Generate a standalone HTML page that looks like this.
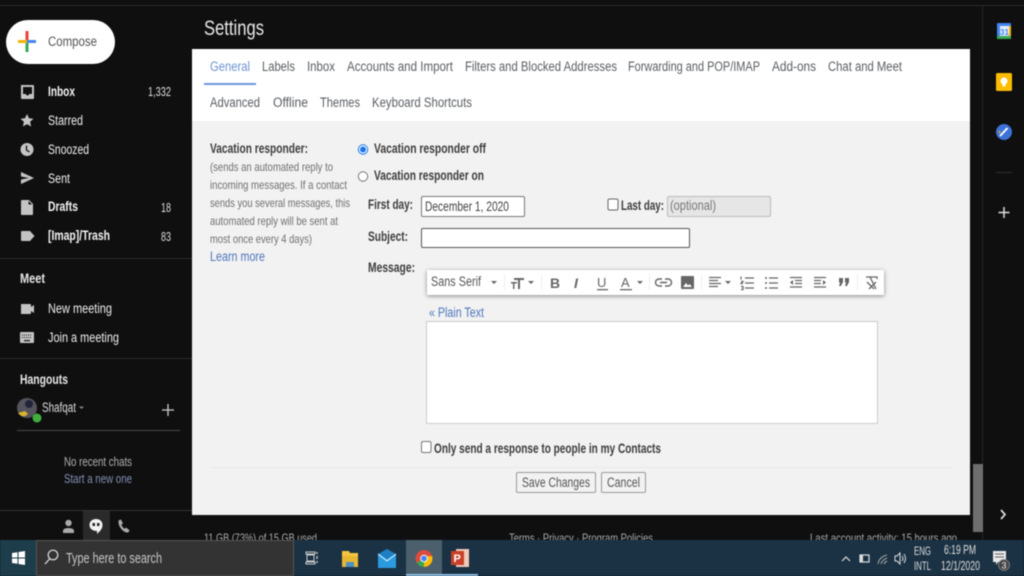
<!DOCTYPE html>
<html><head><meta charset="utf-8"><style>
html,body{margin:0;padding:0;background:#0f0f0f;width:1024px;height:576px;overflow:hidden}
svg{display:block;filter:blur(.5px)}
text{font-family:"Liberation Sans",sans-serif;font-size:13.5px}
.b{font-weight:700}
.w{fill:#eee}.g{fill:#5a5e63}.d{fill:#3c3c3c}.m{fill:#666}.l{fill:#4f76bb}
</style></head><body>
<svg width="1024" height="576" viewBox="0 0 1024 576" xmlns="http://www.w3.org/2000/svg">
<defs><filter id="sh" x="-5%" y="-30%" width="110%" height="170%"><feDropShadow dx="0" dy="1" stdDeviation="2" flood-color="#000" flood-opacity=".45"/></filter></defs>
<rect width="1024" height="576" fill="#0f0f0f"/>
<rect x="0" y="5" width="1024" height="1" fill="#2a2a2a"/>
<rect x="982" y="6" width="1" height="534" fill="#262626"/>

<!-- Compose -->
<rect x="6" y="20" width="109" height="44" rx="22" fill="#fff"/>
<rect x="18" y="40" width="9" height="3" fill="#f4b400"/><rect x="27" y="40" width="9" height="3" fill="#4285f4"/>
<rect x="25.500" y="31" width="3" height="9" fill="#ea4335"/><rect x="25.500" y="43" width="3" height="9" fill="#34a853"/>
<text x="48" y="46" textLength="49" lengthAdjust="spacingAndGlyphs" fill="#555">Compose</text>

<!-- Nav icons -->
<path d="M21 85h12a1 1 0 0 1 1 1v12a1 1 0 0 1-1 1H22a1 1 0 0 1-1-1zM23 87v7h3a1.500 1.500 0 0 0 3 0h3v-7z" fill="#c4c4c4" fill-rule="evenodd"/>
<path d="M27 114l2 4.300 4.500.5-3.400 3 1 4.700-4.100-2.400-4.100 2.400 1-4.700-3.400-3 4.500-.5z" fill="#c4c4c4"/>
<circle cx="27" cy="149.500" r="6.500" fill="#c4c4c4"/><path d="M26.500 145.500v4.500l3 2" fill="none" stroke="#111" stroke-width="1.300"/>
<path d="M21 172l13 6-13 6 0-4.500 8-1.500-8-1.500z" fill="#c4c4c4"/>
<path d="M22 200h7l4 4v10a1 1 0 0 1-1 1H22a1 1 0 0 1-1-1v-13a1 1 0 0 1 1-1z" fill="#c4c4c4"/><path d="M28.500 201v3.500H32" fill="#111"/>
<path d="M22 231h8l4.500 5-4.500 5h-8a1 1 0 0 1-1-1v-8a1 1 0 0 1 1-1z" fill="#c4c4c4"/>

<!-- Nav text -->
<text x="48" y="96" class="b" textLength="27" lengthAdjust="spacingAndGlyphs" fill="#f4f4f4">Inbox</text>
<text x="148" y="96" textLength="23" lengthAdjust="spacingAndGlyphs" fill="#ddd" style="font-size:12.5px">1,332</text>
<text x="48" y="125" textLength="35" lengthAdjust="spacingAndGlyphs" class="w">Starred</text>
<text x="48" y="154" textLength="41" lengthAdjust="spacingAndGlyphs" class="w">Snoozed</text>
<text x="48" y="183" textLength="22" lengthAdjust="spacingAndGlyphs" class="w">Sent</text>
<text x="48" y="211" class="b" textLength="30" lengthAdjust="spacingAndGlyphs" fill="#f4f4f4">Drafts</text>
<text x="161" y="212" textLength="10" lengthAdjust="spacingAndGlyphs" fill="#ddd" style="font-size:12.5px">18</text>
<text x="48" y="240" class="b" textLength="62" lengthAdjust="spacingAndGlyphs" fill="#f4f4f4">[Imap]/Trash</text>
<text x="161" y="241" textLength="10" lengthAdjust="spacingAndGlyphs" fill="#ddd" style="font-size:12.5px">83</text>
<rect x="0" y="258" width="192" height="1" fill="#2b2b2b"/>

<!-- Meet -->
<text x="20" y="283" class="b" textLength="25" lengthAdjust="spacingAndGlyphs" fill="#e8e8e8">Meet</text>
<path d="M21 304h9a1 1 0 0 1 1 1v2l3-2v8l-3-2v2a1 1 0 0 1-1 1h-9z" fill="#c4c4c4"/>
<rect x="20" y="332" width="14" height="11" rx="1" fill="#c4c4c4"/><path d="M22 335h10M22 337.500h10" stroke="#111" stroke-width="1" stroke-dasharray="1 1"/><rect x="24" y="340" width="6" height="1.200" fill="#111"/>
<text x="48" y="313" textLength="64" lengthAdjust="spacingAndGlyphs" class="w">New meeting</text>
<text x="48" y="342" textLength="71" lengthAdjust="spacingAndGlyphs" class="w">Join a meeting</text>
<rect x="0" y="358" width="192" height="1" fill="#2b2b2b"/>

<!-- Hangouts -->
<text x="20" y="384" class="b" textLength="48" lengthAdjust="spacingAndGlyphs" fill="#e8e8e8">Hangouts</text>
<circle cx="27" cy="408" r="10" fill="#55545c"/><circle cx="29" cy="404" r="4" fill="#20253c"/><path d="M18 413q5 6 10 1l-3-3z" fill="#d8b52b"/>
<circle cx="37" cy="418" r="4.500" fill="#3fae3f"/>
<text x="42" y="412" textLength="34" lengthAdjust="spacingAndGlyphs" fill="#ddd">Shafqat</text>
<path d="M79 406.500h5l-2.500 2.500z" fill="#888"/>
<path d="M168 404v12M162 410h12" stroke="#ccc" stroke-width="1.300"/>
<rect x="17" y="430" width="163" height="1" fill="#4a4a4a"/>
<text x="64" y="466" textLength="68" lengthAdjust="spacingAndGlyphs" fill="#b0b0b0" style="font-size:12.5px">No recent chats</text>
<text x="64" y="483" textLength="68" lengthAdjust="spacingAndGlyphs" fill="#8090b4" style="font-size:12.5px">Start a new one</text>
<rect x="0" y="510" width="192" height="1" fill="#333"/>
<rect x="83" y="511" width="27" height="29" fill="#2a2a2a"/>
<circle cx="68.500" cy="523" r="3.200" fill="#aaa"/><path d="M63 533v-2q0-3 5.500-3t5.500 3v2z" fill="#aaa"/>
<path d="M96 519c4.500 0 6.500 3 6.500 6 0 4-3 6.500-5.500 9v-3c-4 0-7.500-2-7.500-6 0-3.500 2.500-6 6.500-6z" fill="#f2f2f2"/><rect x="92.500" y="523" width="2.500" height="3" fill="#222"/><rect x="97" y="523" width="2.500" height="3" fill="#222"/>
<path d="M118.500 520.500l2.500-1 2 4-1.700 1.300q1 2.500 3.200 4l1.700-1.200 3.300 2.700-1 2q-3.500 1-7-3t-3-8.800z" fill="#aaa"/>

<!-- Header -->
<text x="204" y="35" textLength="60" lengthAdjust="spacingAndGlyphs" fill="#e8e8e8" style="font-size:21px">Settings</text>

<!-- Panel -->
<rect x="192" y="49" width="778" height="466" fill="#f2f2f2"/>
<rect x="192" y="49" width="778" height="72" fill="#fff"/>
<rect x="204" y="83" width="52" height="2" fill="#6d96da"/>
<g>
<text x="210" y="71" textLength="40" lengthAdjust="spacingAndGlyphs" fill="#6f93d2">General</text>
<text x="262" y="71" textLength="33" lengthAdjust="spacingAndGlyphs" class="g">Labels</text>
<text x="307" y="71" textLength="28" lengthAdjust="spacingAndGlyphs" class="g">Inbox</text>
<text x="347" y="71" textLength="106" lengthAdjust="spacingAndGlyphs" class="g">Accounts and Import</text>
<text x="465" y="71" textLength="152" lengthAdjust="spacingAndGlyphs" class="g">Filters and Blocked Addresses</text>
<text x="628" y="71" textLength="132" lengthAdjust="spacingAndGlyphs" class="g">Forwarding and POP/IMAP</text>
<text x="772" y="71" textLength="44" lengthAdjust="spacingAndGlyphs" class="g">Add-ons</text>
<text x="828" y="71" textLength="74" lengthAdjust="spacingAndGlyphs" class="g">Chat and Meet</text>
<text x="210" y="107" textLength="50" lengthAdjust="spacingAndGlyphs" class="g">Advanced</text>
<text x="273" y="107" textLength="35" lengthAdjust="spacingAndGlyphs" class="g">Offline</text>
<text x="320" y="107" textLength="40" lengthAdjust="spacingAndGlyphs" class="g">Themes</text>
<text x="372" y="107" textLength="100" lengthAdjust="spacingAndGlyphs" class="g">Keyboard Shortcuts</text>
</g>

<!-- Left description -->
<text x="210" y="153" class="b d" textLength="98" lengthAdjust="spacingAndGlyphs">Vacation responder:</text>
<g fill="#6f6f6f">
<text x="210" y="171" textLength="123" lengthAdjust="spacingAndGlyphs" style="font-size:12px">(sends an automated reply to</text>
<text x="210" y="189" textLength="137" lengthAdjust="spacingAndGlyphs" style="font-size:12px">incoming messages. If a contact</text>
<text x="210" y="207" textLength="140" lengthAdjust="spacingAndGlyphs" style="font-size:12px">sends you several messages, this</text>
<text x="210" y="225" textLength="128" lengthAdjust="spacingAndGlyphs" style="font-size:12px">automated reply will be sent at</text>
<text x="210" y="243" textLength="102" lengthAdjust="spacingAndGlyphs" style="font-size:12px">most once every 4 days)</text>
</g>
<text x="210" y="261" textLength="55" lengthAdjust="spacingAndGlyphs" class="l">Learn more</text>

<!-- Radios -->
<circle cx="363" cy="149.500" r="4.700" fill="#fff" stroke="#1a73e8" stroke-width="1"/><circle cx="363" cy="149.500" r="3" fill="#1a73e8"/>
<circle cx="363" cy="176.500" r="4.700" fill="#fff" stroke="#777" stroke-width="1"/>
<text x="374" y="153" class="b d" textLength="112" lengthAdjust="spacingAndGlyphs">Vacation responder off</text>
<text x="374" y="180" class="b d" textLength="110" lengthAdjust="spacingAndGlyphs">Vacation responder on</text>

<!-- First day -->
<text x="368" y="209" class="b d" textLength="45" lengthAdjust="spacingAndGlyphs">First day:</text>
<rect x="421.500" y="196.500" width="103" height="20" rx="1.500" fill="#fff" stroke="#777"/>
<text x="425" y="211" textLength="84" lengthAdjust="spacingAndGlyphs" fill="#444">December 1, 2020</text>
<rect x="608" y="199" width="10" height="11" rx="1.500" fill="#fff" stroke="#666"/>
<text x="621" y="210" class="b d" textLength="43" lengthAdjust="spacingAndGlyphs">Last day:</text>
<rect x="667.500" y="196.500" width="103" height="20" rx="1.500" fill="#e6e6e6" stroke="#bbb"/>
<text x="670" y="210" textLength="46" lengthAdjust="spacingAndGlyphs" fill="#777">(optional)</text>

<!-- Subject -->
<text x="368" y="241" class="b d" textLength="40" lengthAdjust="spacingAndGlyphs">Subject:</text>
<rect x="421.500" y="228.500" width="268" height="19" rx="1.500" fill="#fff" stroke="#555"/>

<!-- Message -->
<text x="368" y="272" class="b d" textLength="47" lengthAdjust="spacingAndGlyphs">Message:</text>
<rect x="427" y="270" width="457" height="25" rx="1" fill="#fff" filter="url(#sh)"/>
<text x="431" y="286" textLength="50" lengthAdjust="spacingAndGlyphs" fill="#555">Sans Serif</text>
<g fill="#666">
<path d="M491 281h6l-3 3zM528 281h6l-3 3zM637 281h6l-3 3zM725 281h6l-3 3z"/>
<rect x="514" y="278" width="10" height="2"/><rect x="518" y="278" width="2" height="11"/>
<rect x="511" y="282" width="6" height="1.500"/><rect x="513" y="282" width="1.500" height="7"/>
</g>
<text x="550" y="288" class="b" fill="#666" style="font-size:14px">B</text>
<text x="574" y="288" font-style="italic" class="b" fill="#666" style="font-size:14px">I</text>
<text x="597" y="287" fill="#666" style="font-size:13px">U</text><rect x="597" y="289" width="11" height="1.300" fill="#666"/>
<text x="621" y="287" fill="#666" style="font-size:13px">A</text><rect x="620" y="289" width="12" height="1.300" fill="#666"/>
<g fill="none" stroke="#666" stroke-width="1.400">
<path d="M662 279h-3a3.500 3.500 0 0 0 0 7h3M665 279h3a3.500 3.500 0 0 1 0 7h-3M660 282.500h7"/>
</g>
<rect x="681" y="276" width="13" height="13" rx="1" fill="#666"/><path d="M683 287l3-4 2 2.500 1.500-1.500 2.500 3z" fill="#fff"/>
<g fill="none" stroke="#666" stroke-width="1.200">
<path d="M709 277.500h12M709 280.500h9M709 283.500h12M709 286.500h9"/>
<path d="M745 278h9M745 283h9M745 288h9M741 276.500v3M741 281.500h2l-2 2h2M741 286.500h2v3h-2"/>
<path d="M769 278h9M769 283h9M769 288h9"/>
<path d="M790 277.500h12M795 280.500h7M795 283.500h7M790 287h12"/>
<path d="M814 277.500h12M814 280.500h7M814 283.500h7M814 287h12"/>
</g>
<g fill="#666">
<circle cx="766" cy="278" r="1"/><circle cx="766" cy="283" r="1"/><circle cx="766" cy="288" r="1"/>
<path d="M793 280l-3 2.500 3 2.500zM823 280l3 2.500-3 2.500z"/>
<path d="M839 278h4v4l-2 4h-2l1-3.500h-1zM845 278h4v4l-2 4h-2l1-3.500h-1z"/>
</g>
<path d="M866 277h11v2M870 277l6 12M867 282l7 7M876 282l-7 7" fill="none" stroke="#666" stroke-width="1.300"/>
<g fill="#eee"><rect x="504" y="274" width="1" height="16"/><rect x="541" y="274" width="1" height="16"/><rect x="649" y="274" width="1" height="16"/><rect x="701" y="274" width="1" height="16"/><rect x="857" y="274" width="1" height="16"/></g>

<text x="429" y="317" textLength="55" lengthAdjust="spacingAndGlyphs" class="l">« Plain Text</text>
<rect x="426.500" y="321.500" width="451" height="102" fill="#fff" stroke="#ccc"/>

<!-- Contacts -->
<rect x="421.500" y="441.500" width="9.500" height="11" rx="1.500" fill="#fff" stroke="#777"/>
<text x="434" y="453" class="b d" textLength="227" lengthAdjust="spacingAndGlyphs">Only send a response to people in my Contacts</text>
<rect x="210" y="467" width="743" height="1" fill="#e8e8e8"/>
<rect x="516.500" y="472.500" width="79" height="20" rx="1.500" fill="#f2f2f2" stroke="#999"/>
<text x="522" y="487" textLength="68" lengthAdjust="spacingAndGlyphs" fill="#555">Save Changes</text>
<rect x="601.500" y="472.500" width="44" height="20" rx="1.500" fill="#f2f2f2" stroke="#999"/>
<text x="607" y="487" textLength="33" lengthAdjust="spacingAndGlyphs" fill="#555">Cancel</text>

<!-- Scrollbar -->
<rect x="973" y="464" width="10" height="68" fill="#6e6e6e"/>

<!-- Right rail -->
<rect x="997" y="23" width="14" height="16" rx="1" fill="#4285f4"/>
<rect x="997" y="36" width="14" height="3" fill="#34a853"/><rect x="1000" y="26" width="9" height="10" fill="#e8eef8"/><rect x="1009" y="26" width="2" height="10" fill="#f4b400"/>
<text x="1000" y="35" fill="#4285f4" class="b" style="font-size:8px">31</text>
<rect x="996" y="73" width="16" height="18" rx="1.500" fill="#fbbc04"/>
<circle cx="1004" cy="81" r="3.500" fill="#fff"/><rect x="1002.500" y="84" width="3" height="2.500" fill="#fff"/>
<circle cx="1004" cy="132" r="8" fill="#3f72d8"/><path d="M1000 136l7.500-8" fill="none" stroke="#fff" stroke-width="1.900"/><circle cx="999.500" cy="132" r="1" fill="#f4b400"/>
<rect x="996" y="172" width="16" height="1" fill="#2e2e2e"/>
<path d="M1004 207v11M998.500 212.500h11" stroke="#ddd" stroke-width="1.500"/>
<path d="M1001 510l4 4.500-4 4.500" fill="none" stroke="#ddd" stroke-width="1.700"/>

<!-- Footer -->
<text x="204" y="542" textLength="113" lengthAdjust="spacingAndGlyphs" fill="#aaa" style="font-size:12px">11 GB (73%) of 15 GB used</text>
<text x="509" y="542" textLength="144" lengthAdjust="spacingAndGlyphs" fill="#aaa" style="font-size:12px">Terms · Privacy · Program Policies</text>
<text x="810" y="542" textLength="147" lengthAdjust="spacingAndGlyphs" fill="#aaa" style="font-size:12px">Last account activity: 15 hours ago</text>

<!-- Taskbar -->
<rect x="0" y="540" width="1024" height="36" fill="#1b3244"/>
<rect x="0" y="540" width="36" height="36" fill="#1e3d4a"/>
<path d="M12 553l5.500-.8v5.300H12zM18.500 552l6.500-1v6.500h-6.500zM12 558.500h5.500v5.300L12 563zM18.500 558.500H25v6.500l-6.500-1z" fill="#fff"/>
<rect x="36.500" y="540.500" width="257" height="35" fill="#333" stroke="#555"/>
<circle cx="53" cy="555" r="4.800" fill="none" stroke="#ddd" stroke-width="1.200"/><path d="M49.500 559l-4.500 5" stroke="#ddd" stroke-width="1.300"/>
<text x="66" y="563" textLength="96" lengthAdjust="spacingAndGlyphs" fill="#c8c8c8" style="font-size:15px">Type here to search</text>
<path d="M306 552h9v2h-9zM306 562h9v2h-9z" fill="none" stroke="#ccc" stroke-width="1"/><rect x="307" y="555" width="7" height="6" fill="none" stroke="#ccc"/><path d="M317 552v2M317 556v3M317 561v2" stroke="#ccc" stroke-width="1.300"/>
<path d="M342 551h7l1 2h8v14h-16z" fill="#f5c542"/><rect x="342" y="556" width="16" height="11" fill="#e7b632"/><rect x="346" y="562" width="8" height="5" fill="#4a90c8"/>
<rect x="378" y="554" width="18" height="14" fill="#2b9be0"/><path d="M378 554l9-5 9 5-9 5z" fill="#1f7fc4"/><path d="M378 554l9 7 9-7" fill="none" stroke="#e4f6ff" stroke-width="1"/>
<rect x="406" y="540" width="36" height="36" fill="#4b5f6c"/><rect x="406" y="574" width="36" height="2" fill="#8fc1e8"/>
<rect x="442" y="574" width="36" height="2" fill="#8fc1e8"/>
<circle cx="424" cy="558.500" r="8.500" fill="#dd4b3e"/><path d="M424 558.500l-7.300 4.300A8.500 8.500 0 0 0 424 567z" fill="#34a853"/><path d="M424 558.500v8.500a8.500 8.500 0 0 0 8.200-10.700L424 556z" fill="#fbbc04"/><circle cx="424" cy="558.500" r="3.800" fill="#fff"/><circle cx="424" cy="558.500" r="2.900" fill="#4285f4"/>
<rect x="456" y="549" width="13" height="18" fill="#f0c9b8"/><rect x="451" y="551" width="13" height="14" fill="#c8402a"/>
<text x="453.500" y="562" class="b" fill="#fff" style="font-size:11px">P</text>

<path d="M842 561l4-4 4 4" fill="none" stroke="#ddd" stroke-width="1.200"/>
<rect x="860" y="555" width="9" height="7" fill="none" stroke="#ddd" stroke-width="1.200"/><rect x="860.500" y="555.500" width="2.500" height="6" fill="#ddd"/>
<path d="M878 564q1-7 9-9M881 564q1-4 6-6M884 564q1-2 3-3" fill="none" stroke="#aaa" stroke-width="1"/>
<path d="M895 556h2l3-3v11l-3-3h-2z" fill="none" stroke="#ddd" stroke-width="1"/><path d="M902 556q2 2.500 0 5M904 554q3 4.500 0 9" fill="none" stroke="#ddd" stroke-width="1"/>
<text x="914" y="555" textLength="17" lengthAdjust="spacingAndGlyphs" fill="#ddd" style="font-size:11.5px">ENG</text>
<text x="914" y="570" textLength="17" lengthAdjust="spacingAndGlyphs" fill="#ddd" style="font-size:11.5px">INTL</text>
<text x="944" y="554" textLength="32" lengthAdjust="spacingAndGlyphs" fill="#ddd" style="font-size:12.5px">6:19 PM</text>
<text x="941" y="570" textLength="39" lengthAdjust="spacingAndGlyphs" fill="#ddd" style="font-size:12.5px">12/1/2020</text>
<path d="M993 551h13v11h-8l-2 3v-3h-3z" fill="#e8e8e8"/><path d="M995 554h9M995 557h9" stroke="#666" stroke-width="1"/>
<circle cx="1004" cy="565" r="5.500" fill="#444" stroke="#888" stroke-width=".8"/>
<text x="1001.500" y="568.500" fill="#eee" style="font-size:9px">3</text>
</svg>
</body></html>
